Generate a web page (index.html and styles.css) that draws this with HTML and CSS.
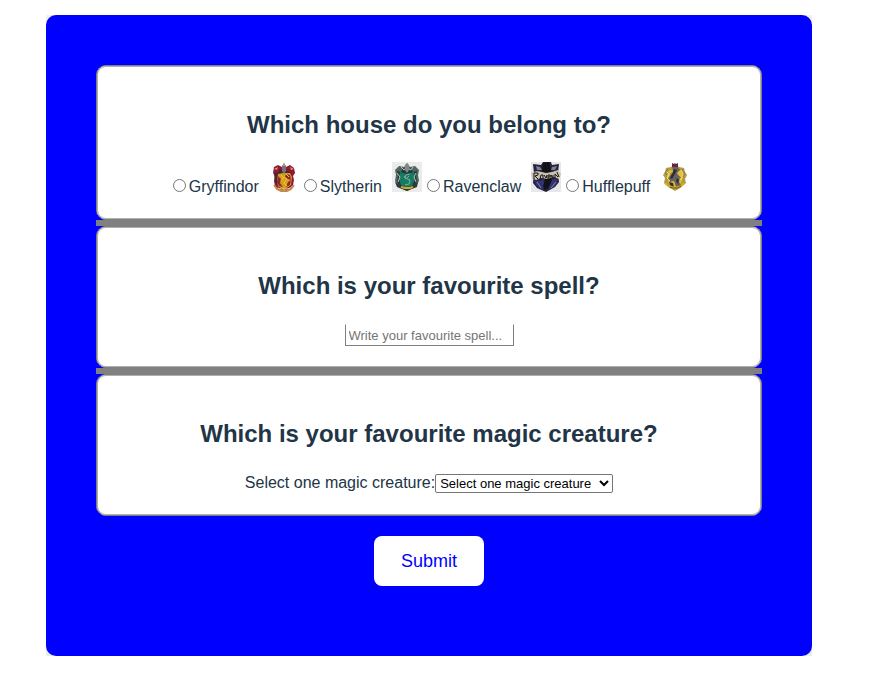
FILE: index.html
```html
<!DOCTYPE html>
<html lang="en">
<head>
<meta charset="utf-8">
<meta name="viewport" content="width=device-width, initial-scale=1">
<title>Magic survey</title>
<link rel="stylesheet" href="styles.css">
</head>
<body>
<form class="survey">
  <section class="question">
    <h2 id="house-title">Which house do you belong to?</h2>
    <div class="houses" role="radiogroup" aria-labelledby="house-title">
      <label class="house"><input type="radio" name="house" value="gryffindor"><span>Gryffindor</span>
        <svg class="crest" viewBox="0 0 30 30" aria-hidden="true">
          <path fill="#8f173c" d="M15 1l2 4 4-2 4 3 1 5-2 3 1 4-1 5-4 4-5 2-5-2-4-3-1-5 1-5-2-3 1-6 4-2 4 2z"/>
          <path fill="#4a2630" d="M5 11l4 0 2-4 3 2 5 0 3 2-2 4-5-3-5 4-2 7-2-3z"/>
          <path fill="#d5a01b" d="M9 12l5-1 7 0 2 4-1 8-7 5-6-4-1-6z"/>
          <path fill="#8e2733" d="M9 14l3 3-1 4 3 4-4-1-2-4zm8-2l4 1 1 5-3-1-3-2zm2 8l3-2-1 5-4 2z"/>
          <path fill="#777079" d="M13 4l2-2 2 2v5l-2 3-2-3z"/>
          <path fill="#d8a640" d="M14 4l1-4 1 4zM5 7l4-2-1 3zm16-2l4 2-3 1z"/>
          <path fill="none" stroke="#edc635" d="M12 19l3-4 3 2-3 4 3 3M17 12l3 3M12 13l2 2"/>
          <path fill="none" stroke="#c48b4b" stroke-width="2" d="M5 23l3 4 4 2h6l4-2 3-4"/>
          <path fill="none" stroke="#e6c58e" d="M9 26l4 1h5l3-1"/>
        </svg></label>
      <label class="house"><input type="radio" name="house" value="slytherin"><span>Slytherin</span>
        <svg class="crest" viewBox="0 0 30 30" aria-hidden="true">
          <path fill="#ebebeb" d="M0 0h30v30H0z"/>
          <path fill="#526661" d="M15 1l3 4 5-1 4 4-1 5 1 6-3 5-9 5-9-4-3-6 1-6-1-5 4-4 5 1z"/>
          <path fill="#26383a" d="M5 9l4 1 2-4 4 3 4-3 2 4 4-1-1 5 1 6-5 6H9l-4-6 1-6z"/>
          <path fill="#147c62" d="M8 10l7 2 7-2 1 7-3 7-5 3-6-4-2-6z"/>
          <path fill="none" stroke="#8ba99b" d="M18 12l-4 1-1 3 5 2-1 4-4 1M12 14l2 3M17 14l-2 2"/>
          <path fill="none" stroke="#b7bfbc" d="M9 5l3 3 3-2 4 2 2-3M5 11l3 4-2 5M24 11l-2 4 2 5"/>
          <path fill="#818987" d="M13 3l2-2 2 2v5l-2 3-2-3z"/>
          <path fill="#283c3b" d="M3 20l6 4 6 1 6-1 5-4-1 5-10 4-10-4z"/>
          <path fill="none" stroke="#d1a929" stroke-width="2" d="M9 25l4 1h5l3-1"/>
        </svg></label>
      <label class="house"><input type="radio" name="house" value="ravenclaw"><span>Ravenclaw</span>
        <svg class="crest" viewBox="0 0 30 30" aria-hidden="true">
          <path fill="#e7e7e9" d="M0 0h30v30H0z"/>
          <path fill="#24223c" d="M2 2l8 1 2-3h8l1 3 7-1-1 9 1 9-4 5-9 5-9-4-4-5 1-10z"/>
          <path fill="#303374" d="M4 18l6 1 2-3 2 8-3 4-6-5zm16 0l7-1-3 7-6 4 0-6z"/>
          <path fill="#7b7e9b" d="M5 4l4 1 2 3-5 0zm16 1l5-1-2 4-4 0z"/>
          <path fill="#111117" d="M12 1l6-1 2 8-2 4 3 6-3 7-4 3-2-4 2-6-3-6z"/>
          <path fill="#c9c2ac" d="M0 11l6-2 5 1 4 1 6-1 6-2 3 4-2 5-5-2-6 2-7-1-5 2-4-2z"/>
          <path fill="none" stroke="#171319" d="M3 17v-6l4 0v2l-3 1 3 3m2 0l1-4h2v4m1-4l2 3 1-3m1 2h2v-2h-2v4h2m1 0v-4l2 3v-3m2 3v-4l3 3M26 10l2 5"/>
          <path fill="none" stroke="#8586a9" d="M6 20l4 6M25 20l-5 6"/>
        </svg></label>
      <label class="house"><input type="radio" name="house" value="hufflepuff"><span>Hufflepuff</span>
        <svg class="crest" viewBox="0 0 30 30" aria-hidden="true">
          <path fill="#b59b42" d="M15 2l4 3 5 1 1 4 2 3-2 4 1 4-6 5-5 3-5-3-6-5 1-5-2-3 2-3 1-4 5-1z"/>
          <path fill="#e2c137" d="M9 8l5 1 8-1 1 7-3 8-5 3-6-4-2-7z"/>
          <path fill="#68635e" d="M12 5l5-1 3 4-3 3 3 4-1 5 2 3-5 2-2-6-4 1-2-3 3-5 3-1z"/>
          <path fill="#302e32" d="M14 7l3 1-2 4-3 5-2-1 2-4zm3 9l2 2-1 4-2-3zM9 20l4 1 1 4-4-2z"/>
          <path fill="#62283b" d="M12 1l2 1 1-1 1 1 2-1v4h-6z"/>
          <path fill="none" stroke="#f0dc68" d="M6 9l3 3-2 4 3 3M21 8l2 4-2 6"/>
          <path fill="none" stroke="#85786b" d="M8 7l-3 4 2 2M22 7l3 5-2 3M10 12l3-2M17 12l4 4"/>
          <path fill="none" stroke="#d4aa24" stroke-width="2" d="M5 21l5 4 5 1 5-1 4-4"/>
          <path fill="none" stroke="#65542d" d="M10 25l3 1h5l3-2"/>
        </svg></label>
    </div>
  </section>
  <hr class="divider">
  <section class="question">
    <h2 id="spell-title">Which is your favourite spell?</h2>
    <div class="field">
      <input class="spell" type="text" name="spell" placeholder="Write your favourite spell..." aria-labelledby="spell-title">
    </div>
  </section>
  <hr class="divider">
  <section class="question">
    <h2>Which is your favourite magic creature?</h2>
    <div class="field">
      <label for="creature">Select one magic creature:</label>
      <select class="creature" id="creature" name="creature"><option>Select one magic creature</option></select>
    </div>
  </section>
  <button class="submit" type="submit">Submit</button>
</form>
</body>
</html>
```
FILE: styles.css
```css
* {
  box-sizing: border-box;
}

body {
  margin: 15px 61px 35px 46px;
  background: #fff;
  color: #213547;
  font: 16px/24px "Liberation Sans", Arial, sans-serif;
}

.survey {
  display: flex;
  flex-direction: column;
  padding: 50px 50px 70px;
  border-radius: 10px;
  background: #00f;
  box-shadow: 0 2px 24px rgba(0, 0, 0, 0.25);
}

.question {
  padding: 45px 20px 20px;
  border: 1px solid #808080;
  border-radius: 10px;
  background: #fff;
  box-shadow: inset 0 0 0 1px #b0b0b0;
  text-align: center;
}

h2 {
  margin: 0 0 23px;
  font-size: 24px;
  line-height: 28px;
}

.houses {
  display: flex;
  flex-wrap: wrap;
  justify-content: center;
}

.house {
  display: flex;
  align-items: baseline;
  padding-left: 5px;
}

.house input {
  width: 13px;
  height: 13px;
  margin: 0 3px 0 0;
}

.crest {
  width: 30px;
  height: 30px;
  margin-left: 10px;
}

.divider {
  width: 100%;
  height: 6px;
  margin: 0;
  border: 0;
  background: #808080;
}

.field {
  display: flex;
  align-items: center;
  justify-content: center;
  min-height: 24px;
}

.spell {
  width: 169px;
  height: 22px;
  padding: 1px 3px;
  border: 1px solid #808080;
  border-top-color: transparent;
  background: #fff;
  font: 13px "Liberation Sans", Arial, sans-serif;
}

.spell::placeholder {
  color: #757575;
}

.creature {
  width: 178px;
  height: 19px;
  border: 1px solid #767676;
  border-radius: 2px;
  background: #fff;
  color: #000;
  font: 13px "Liberation Sans", Arial, sans-serif;
}

.submit {
  align-self: center;
  width: 110px;
  height: 50px;
  margin-top: 20px;
  border: 0;
  border-radius: 8px;
  background: #fff;
  color: #00f;
  font: 18px "Liberation Sans", Arial, sans-serif;
}
```
